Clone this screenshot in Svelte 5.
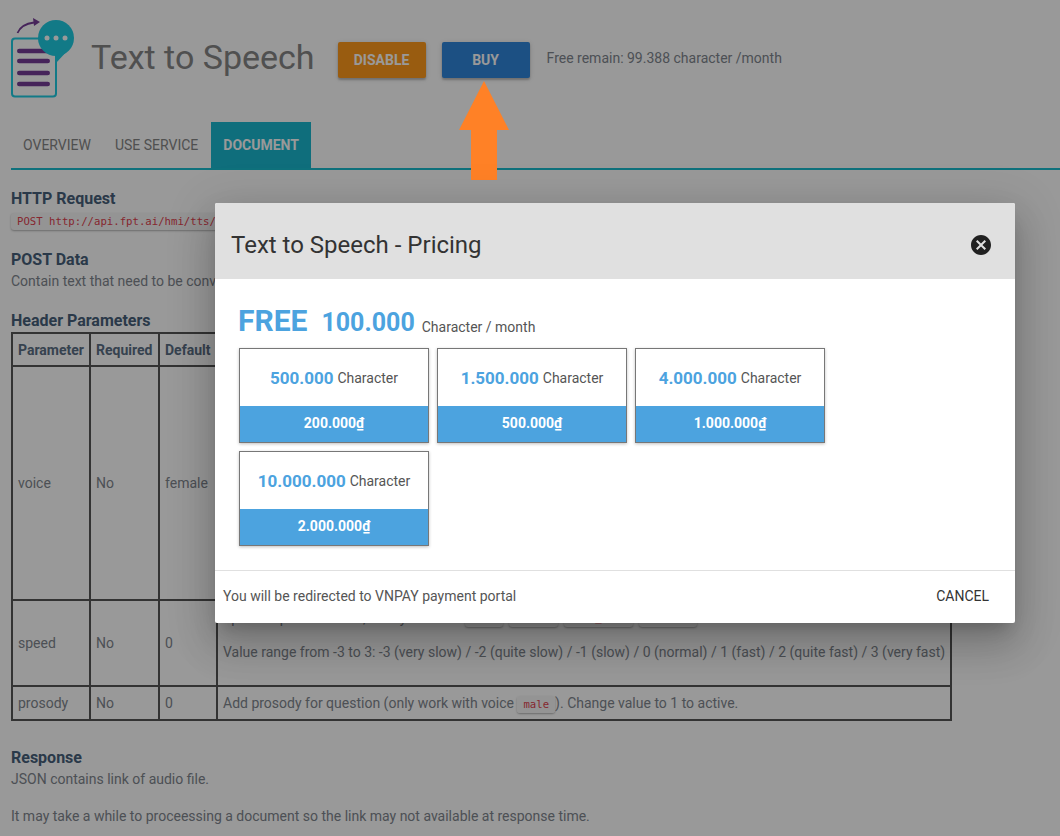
<script lang="ts">
  const plans = [
    { chars: '500.000', price: '200.000' },
    { chars: '1.500.000', price: '500.000' },
    { chars: '4.000.000', price: '1.000.000' },
    { chars: '10.000.000', price: '2.000.000' }
  ];
</script>

<div class="page">
  <header class="top">
    <svg class="logo" width="66" height="82" viewBox="0 0 66 82" aria-hidden="true">
      <rect x="1" y="21.500" width="44" height="58" rx="3" fill="none" stroke="#1ecbe1" stroke-width="2" />
      <path d="M8.300 34h28.400M8.300 44h28.400M8.300 56h28.400M8.300 67h28.400" stroke="#763c96" stroke-width="4.600" stroke-linecap="round" />
      <path d="M6.500 16C9 10 15 6.500 23 5.500" fill="none" stroke="#763c96" stroke-width="1.800" />
      <path d="M29 5L22 1 23 9z" fill="#763c96" />
      <circle cx="45" cy="21" r="18" fill="#1ecbe1" />
      <path d="M45 36V46L58 32z" fill="#1ecbe1" />
      <g fill="#ffffff"><circle cx="36" cy="21" r="2.500" /><circle cx="45" cy="21" r="2.500" /><circle cx="54" cy="21" r="2.500" /></g>
    </svg>
    <h1>Text to Speech</h1>
    <button class="act disable" type="button">DISABLE</button>
    <button class="act buy" type="button">BUY</button>
    <span class="remain">Free remain: 99.388 character /month</span>
  </header>

  <nav class="tabs">
    <span class="tab">OVERVIEW</span>
    <span class="tab">USE SERVICE</span>
    <span class="tab active">DOCUMENT</span>
  </nav>

  <section class="doc">
    <h2 class="h-request">HTTP Request</h2>
    <code class="url">POST http://api.fpt.ai/hmi/tts/v5</code>

    <h2 class="h-post">POST Data</h2>
    <p>Contain text that need to be converted to speech</p>

    <h2 class="h-header">Header Parameters</h2>
    <table>
      <colgroup>
        <col style="width:78px" /><col style="width:69px" /><col style="width:58px" /><col />
      </colgroup>
      <thead>
        <tr><th>Parameter</th><th>Required</th><th>Default</th><th>Description</th></tr>
      </thead>
      <tbody>
        <tr class="voice"><td>voice</td><td>No</td><td>female</td><td></td></tr>
        <tr class="speed">
          <td>speed</td><td>No</td><td>0</td>
          <td class="speed-desc">
            <div class="chips">
              <span class="lead">Speech speed of voice, set by either</span>
              <code class="c1">slow</code><code class="c2">normal</code><code class="c3">very_fast</code><code class="c4">default</code>
            </div>
            <div class="range">Value range from -3 to 3: -3 (very slow) / -2 (quite slow) / -1 (slow) / 0 (normal) / 1 (fast) / 2 (quite fast) / 3 (very fast)</div>
          </td>
        </tr>
        <tr class="prosody">
          <td>prosody</td><td>No</td><td>0</td>
          <td>Add prosody for question (only work with voice <code class="male">male</code>). Change value to 1 to active.</td>
        </tr>
      </tbody>
    </table>

    <h2 class="h-response">Response</h2>
    <p>JSON contains link of audio file.</p>
    <p class="later">It may take a while to proceessing a document so the link may not available at response time.</p>
  </section>

  <div class="overlay"></div>

  <svg class="arrow" width="50" height="100" viewBox="0 0 50 100" aria-hidden="true">
    <path d="M25 0L50 49H38V99H12V49H0z" fill="#ff8126" />
  </svg>

  <div class="modal">
    <div class="m-head">
      <span class="m-title">Text to Speech - Pricing</span>
      <svg class="close" width="24" height="24" viewBox="0 0 24 24" aria-hidden="true">
        <path fill="#212121" d="M12 2C6.470 2 2 6.470 2 12s4.470 10 10 10 10-4.470 10-10S17.530 2 12 2zm5 13.590L15.590 17 12 13.410 8.410 17 7 15.590 10.590 12 7 8.410 8.410 7 12 10.590 15.590 7 17 8.410 13.410 12 17 15.590z" />
      </svg>
    </div>
    <div class="m-body">
      <div class="free">
        <b class="f-word">FREE</b>
        <b class="f-num">100.000</b>
        <span class="f-unit">Character / month</span>
      </div>
      <div class="cards">
        {#each plans as p (p.chars)}
          <div class="card">
            <div class="amount"><b>{p.chars}</b> Character</div>
            <div class="price">{p.price}₫</div>
          </div>
        {/each}
      </div>
    </div>
    <div class="m-foot">
      <span class="note">You will be redirected to VNPAY payment portal</span>
      <span class="cancel">CANCEL</span>
    </div>
  </div>
</div>

<style>
  :global(body) {
    margin: 0;
    background: #fff;
  }

  .page {
    position: relative;
    height: 836px;
    overflow: hidden;
    font-family: Roboto, "Liberation Sans", sans-serif;
    font-size: 14px;
    color: #80868e;
  }

  .top {
    display: flex;
    align-items: flex-start;
    height: 122px;
    padding: 17px 0 0 11px;
    box-sizing: border-box;
  }
  .logo {
    flex: none;
    margin-right: 15px;
  }
  h1 {
    margin: 19px 23px 0 -1px;
    font-size: 34px;
    line-height: 42px;
    font-weight: 400;
    color: #858585;
    white-space: nowrap;
  }
  .act {
    width: 88px;
    height: 36px;
    margin: 25px 16px 0 0;
    padding: 0;
    border: 0;
    border-radius: 2px;
    font: 700 14px Roboto, sans-serif;
    color: #fff;
    box-shadow: 0 2px 2px rgba(0, 0, 0, 0.2), 0 1px 5px rgba(0, 0, 0, 0.15);
  }
  .disable {
    background: #ff9a1b;
  }
  .buy {
    background: #2f86da;
  }
  .remain {
    margin-top: 33px;
    margin-left: 1px;
    line-height: 16px;
    white-space: nowrap;
  }

  .tabs {
    display: flex;
    height: 46px;
    margin-left: 11px;
    border-bottom: 2px solid #1abccf;
  }
  .tab {
    display: flex;
    align-items: center;
    padding: 0 12px;
    font-weight: 400;
    color: #858585;
  }
  .tab.active {
    margin-left: 1px;
    background: #1ab8cf;
    color: #fff;
    font-weight: 700;
  }

  .doc {
    padding-left: 11px;
  }
  h2 {
    margin: 0;
    font-size: 16px;
    line-height: 20px;
    font-weight: 700;
    color: #47607a;
  }
  .h-request {
    padding-top: 19px;
  }
  .h-post {
    margin-top: 20px;
  }
  .h-header {
    margin-top: 19px;
    margin-bottom: 1px;
  }
  .h-response {
    margin-top: 27px;
  }
  p {
    margin: 0;
    line-height: 22px;
  }
  .later {
    margin-top: 15px;
  }

  code {
    font-family: "DejaVu Sans Mono", monospace;
    font-size: 10.660px;
    color: #e0424f;
    background: #f7f7f7;
    border-radius: 3px;
    padding: 2px 6px;
    box-shadow: 0 1px 2px rgba(0, 0, 0, 0.3);
  }
  .url {
    display: block;
    width: 300px;
    height: 13px;
    line-height: 13px;
    margin-top: 4px;
  }

  table {
    width: 941px;
    table-layout: fixed;
    border-collapse: collapse;
    border: 2px solid #555;
  }
  th,
  td {
    border: 2px solid #555;
    padding: 0 5px;
    text-align: left;
    vertical-align: middle;
  }
  th {
    height: 31px;
    font-weight: 700;
    color: #5a6e84;
  }
  .voice td {
    height: 232px;
  }
  .speed td {
    height: 84px;
  }
  .speed td.speed-desc {
    height: 78px;
    vertical-align: top;
    padding-top: 6px;
  }
  .prosody td {
    height: 32px;
  }
  .chips {
    display: flex;
    align-items: center;
    height: 22px;
    white-space: nowrap;
  }
  .lead {
    width: 242px;
  }
  .chips code {
    display: block;
    box-sizing: border-box;
    height: 18px;
    line-height: 14px;
    margin-right: 6px;
    padding: 2px 0;
    text-align: center;
  }
  .c1 {
    width: 38px;
  }
  .c2 {
    width: 49px;
  }
  .c3 {
    width: 69px;
  }
  .c4 {
    width: 58px;
  }
  .range {
    margin-top: 13px;
    line-height: 20px;
    white-space: nowrap;
  }

  .overlay {
    position: absolute;
    inset: 0;
    background: rgba(0, 0, 0, 0.4);
  }
  .arrow {
    position: absolute;
    left: 459px;
    top: 81px;
  }

  .modal {
    position: absolute;
    left: 215px;
    top: 203px;
    width: 800px;
    height: 420px;
    display: flex;
    flex-direction: column;
    background: #fff;
    border-radius: 2px;
    box-shadow: 0 11px 15px -7px rgba(0, 0, 0, 0.2), 0 24px 38px 3px rgba(0, 0, 0, 0.14), 0 9px 46px 8px rgba(0, 0, 0, 0.12);
  }
  .m-head {
    display: flex;
    align-items: center;
    justify-content: space-between;
    box-sizing: border-box;
    height: 76px;
    padding: 7px 22px 0 16px;
    background: #e0e0e0;
    border-radius: 2px 2px 0 0;
  }
  .m-title {
    font-size: 24px;
    color: #333;
  }
  .m-body {
    flex: 1;
    padding: 24px 24px 0 24px;
  }
  .free {
    display: flex;
    align-items: baseline;
    height: 45px;
    margin-left: -1px;
    color: #4ca3df;
  }
  .f-word {
    font-size: 30px;
    line-height: 36px;
    margin-right: 14px;
  }
  .f-num {
    font-size: 25px;
    margin-right: 7px;
  }
  .f-unit {
    position: relative;
    top: 1px;
    font-size: 14px;
    color: #555;
  }
  .cards {
    display: flex;
    flex-wrap: wrap;
    gap: 8px;
  }
  .card {
    box-sizing: border-box;
    width: 190px;
    height: 95px;
    display: flex;
    flex-direction: column;
    border: 1px solid #777;
    box-shadow: 0 1px 3px rgba(0, 0, 0, 0.25);
  }
  .amount {
    flex: 1;
    display: flex;
    align-items: center;
    justify-content: center;
    gap: 4px;
    font-size: 14px;
    color: #555;
  }
  .amount b {
    font-size: 17px;
    font-weight: 700;
    color: #4ca3df;
  }
  .price {
    height: 36px;
    line-height: 34px;
    background: #4ca3df;
    color: #fff;
    font-weight: 700;
    font-size: 14px;
    text-align: center;
  }
  .m-foot {
    display: flex;
    align-items: center;
    justify-content: space-between;
    box-sizing: border-box;
    height: 53px;
    padding: 0 26px 2px 8px;
    border-top: 1px solid #e0e0e0;
    color: #555;
  }
  .cancel {
    color: #333;
    font-weight: 400;
  }
</style>
